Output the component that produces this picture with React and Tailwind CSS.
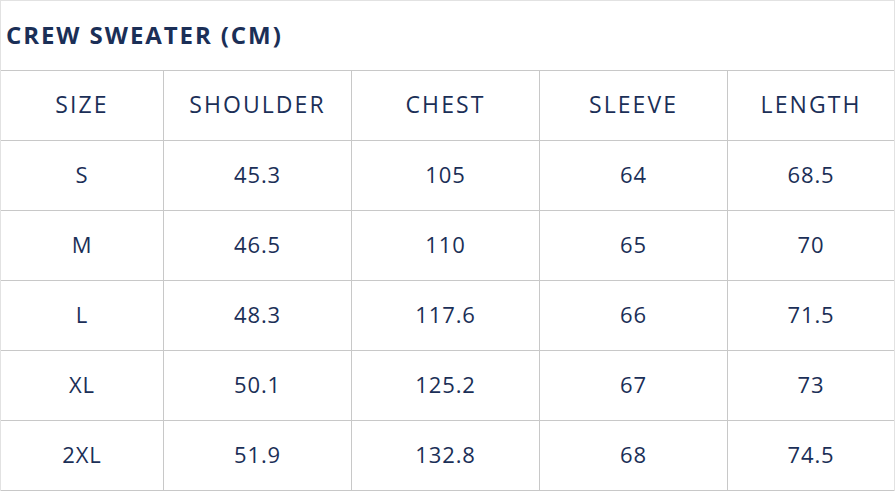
const header = ["SIZE", "SHOULDER", "CHEST", "SLEEVE", "LENGTH"];

const rows = [
  ["S", "45.3", "105", "64", "68.5"],
  ["M", "46.5", "110", "65", "70"],
  ["L", "48.3", "117.6", "66", "71.5"],
  ["XL", "50.1", "125.2", "67", "73"],
  ["2XL", "51.9", "132.8", "68", "74.5"],
];

const Row = ({ cells, head }) => (
  <div
    className={`grid grid-cols-[163px_188px_188px_188px_1fr] h-[70px] border-b border-[#c8c8c8] ${
      head ? "text-[23px] tracking-[0.09em]" : "text-[22px] tracking-[0.04em]"
    }`}
  >
    {cells.map((c, i) => (
      <div
        key={i}
        className={`flex items-center justify-center pb-[3px] ${i < 4 ? "border-r border-[#c8c8c8]" : ""}`}
      >
        {c}
      </div>
    ))}
  </div>
);

export default function App() {
  return (
    <div className="w-[895px] h-[491px] bg-white">
      <div
        className="border-l border-t border-r border-[#e2e2e2] text-[#1b2f57]"
        style={{ fontFamily: '"Open Sans", "Noto Sans", sans-serif' }}
      >
        {/* Title */}
        <div className="h-[70px] border-b border-[#c8c8c8] flex items-center pl-[5px] pb-[2px]">
          <h1 className="font-bold text-[24px] tracking-[0.08em]">CREW SWEATER (CM)</h1>
        </div>

        <Row cells={header} head />
        {rows.map((r) => (
          <Row key={r[0]} cells={r} />
        ))}
      </div>
    </div>
  );
}
